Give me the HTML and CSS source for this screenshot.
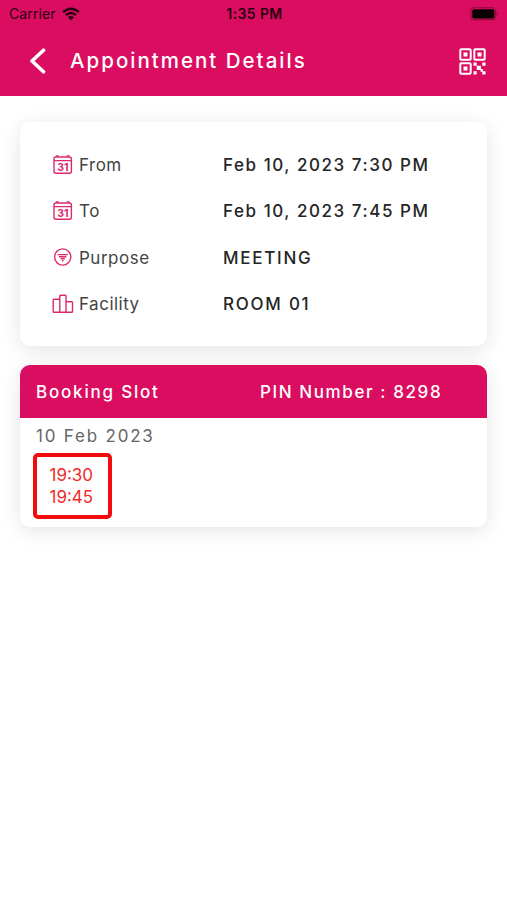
FILE: index.html
```html
<!DOCTYPE html>
<html lang="en">
<head>
<meta charset="utf-8">
<title>Appointment Details</title>
<link rel="stylesheet" href="styles.css">
</head>
<body>
<header class="header">
  <div class="status">
    <div class="carrier"><span>Carrier</span>
      <svg width="18" height="14" viewBox="0 0 18 14"><g fill="none" stroke="#29000f" stroke-width="2.4"><path d="M1 5.2Q9-1.8 17 5.2"/><path d="M3.8 8.2Q9 3.6 14.2 8.2"/></g><path d="M5.9 10.2Q9 7.6 12.1 10.2L9 13.4Z" fill="#29000f"/></svg>
    </div>
    <time class="clock">1:35 PM</time>
    <svg class="battery" width="30" height="14" viewBox="0 0 30 14"><rect x=".8" y=".8" width="25" height="12" rx="3.6" fill="none" stroke="#8b083d" stroke-width="1.1"/><rect x="2.2" y="2.2" width="22.2" height="9.2" rx="2" fill="#080003"/><path d="M27.3 5q2 1.8 0 3.6z" fill="#8b083d"/></svg>
  </div>
  <div class="toolbar">
    <svg class="back" width="18" height="28" viewBox="0 0 18 28"><path d="M15.5 3.2L4 14L15.5 24.8" fill="none" stroke="#fff" stroke-width="3.6" stroke-linecap="round" stroke-linejoin="round"/></svg>
    <h1 class="title">Appointment Details</h1>
    <svg class="qr" width="27" height="27" viewBox="0 0 27 27" fill="#fff"><g fill="none" stroke="#fff" stroke-width="2"><rect x="1.3" y="1.3" width="10.4" height="10.4" rx="1"/><rect x="15.3" y="1.3" width="10.4" height="10.4" rx="1"/><rect x="1.3" y="15.3" width="10.4" height="10.4" rx="1"/></g><path d="M4.5 4.5h4v4h-4zM18.5 4.5h4v4h-4zM4.5 18.5h4v4h-4zM14.5 14.5h3.2v3.2h-3.2zM23.3 14.5h3.2v3.2h-3.2zM17.7 17.7h4.2v4.2h-4.2zM14.5 23.3h3.2v3.2h-3.2zM21.5 21h2.3v2.8h-2.3zM23.3 23.3h3.2v3.2h-3.2z"/></svg>
  </div>
</header>
<main class="content">
  <section class="card details">
    <div class="row">
      <svg class="icon" viewBox="0 0 22 22"><rect x="2" y="3" width="17.4" height="16.2" rx="2"/><path d="M2 6.6h17.4M3.8 1.9h3M14.6 1.9h3"/><text class="day" x="10.8" y="16.6">31</text></svg>
      <span class="label">From</span><span class="value">Feb 10, 2023 7:30 PM</span>
    </div>
    <div class="row">
      <svg class="icon" viewBox="0 0 22 22"><rect x="2" y="3" width="17.4" height="16.2" rx="2"/><path d="M2 6.6h17.4M3.8 1.9h3M14.6 1.9h3"/><text class="day" x="10.8" y="16.6">31</text></svg>
      <span class="label">To</span><span class="value">Feb 10, 2023 7:45 PM</span>
    </div>
    <div class="row">
      <svg class="icon" viewBox="0 0 22 22"><circle cx="10.7" cy="10" r="8.1"/><path d="M5.6 7.6h10.2M7 9.7h7.4M8.6 11.8h4.2M10 13.7h1.4"/></svg>
      <span class="label">Purpose</span><span class="value caps">MEETING</span>
    </div>
    <div class="row">
      <svg class="icon" viewBox="0 0 22 22"><path d="M7.8 19.2H2q-.8 0-.8-.8V7q0-.8.8-.8h5.8M7.8 19.2V3q0-.8.8-.8h4.6q.8 0 .8.8v16.2zM14 8.8h5.7q.8 0 .8.8v8.8q0 .8-.8.8H14"/></svg>
      <span class="label">Facility</span><span class="value caps">ROOM 01</span>
    </div>
  </section>
  <section class="card booking">
    <div class="booking-head"><h2 class="slot">Booking Slot</h2><span class="pin">PIN Number : 8298</span></div>
    <div class="date">10 Feb 2023</div>
    <div class="times"><span>19:30</span><span>19:45</span></div>
  </section>
</main>
</body>
</html>
```

FILE: styles.css
```css
* { box-sizing: border-box; }
body { margin: 0; background: #fff; color: #252525; font-family: Inter, "Liberation Sans", sans-serif; }
svg { display: block; flex: none; }
h1, h2 { margin: 0; }
.header { height: 96px; background: #db0d60; }
.status { display: grid; grid-template-columns: 1fr auto 1fr; align-items: center; height: 27px; padding: 0 7px 0 9px; color: #29000f; font-size: 14px; }
.carrier { display: flex; align-items: center; gap: 6px; letter-spacing: .1px; }
.clock { font-weight: 600; letter-spacing: .4px; }
.battery { justify-self: end; }
.toolbar { display: flex; align-items: center; height: 68px; padding: 0 21px 0 28px; color: #fff; }
.title { flex: 1; margin-left: 24px; font-size: 20.5px; line-height: 28px; font-weight: 500; letter-spacing: 2px; white-space: nowrap; }
.content { display: flex; flex-direction: column; gap: 19px; padding: 26px 20px; }
.card { border-radius: 10px; background: #fff; box-shadow: 0 4px 20px rgba(0, 0, 0, .11); }
.details { height: 224px; padding: 20px 32px; }
.row { display: grid; grid-template-columns: 27px 144px 1fr; align-items: center; height: 46.3px; white-space: nowrap; }
.icon { width: 22px; height: 22px; fill: none; stroke: #dc286d; stroke-width: 1.4; }
.day { fill: #dc286d; stroke: none; font-size: 10.5px; font-weight: 700; text-anchor: middle; }
.label { color: #444; font-size: 17px; letter-spacing: .5px; }
.value { font-size: 17px; font-weight: 500; letter-spacing: 1.55px; }
.caps { letter-spacing: 1.75px; }
.booking { height: 162px; overflow: hidden; }
.booking-head { display: grid; grid-template-columns: 224px 1fr; align-items: center; height: 53px; padding-left: 16px; background: #db0d60; color: #fff; font-size: 17px; font-weight: 500; letter-spacing: 1.6px; white-space: nowrap; }
.slot { font: inherit; letter-spacing: 1.8px; }
.date { height: 35px; padding: 1px 0 0 16px; color: #666; font-size: 17px; line-height: 35px; letter-spacing: 1.8px; }
.times { display: flex; flex-direction: column; width: 79px; height: 66px; margin-left: 12.5px; padding: 7px 0 0 13px; border: 4px solid #f40b0b; border-radius: 5px; color: #f22a2a; font-size: 17px; line-height: 22px; }
```
